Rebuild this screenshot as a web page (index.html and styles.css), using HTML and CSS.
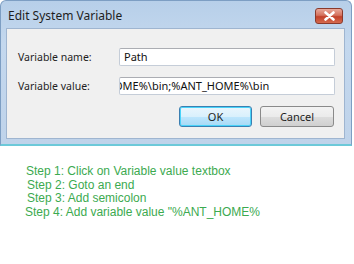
FILE: index.html
```html
<!doctype html>
<html>
<head>
	<title>Edit System Variable</title>
	<meta charset="utf-8" />
	<link rel="stylesheet" href="styles.css">
</head>
<body>
	<div class="window">
		<div class="titlebar">
			<span class="title">Edit System Variable</span>
			<div class="close">
				<svg width="13" height="10" viewBox="0 0 13 10">
					<path d="M2.5 1.5 L10.5 8.5 M10.5 1.5 L2.5 8.5" stroke="#ffffff" stroke-width="2.6" stroke-linecap="round"/>
				</svg>
			</div>
		</div>
		<div class="client">
			<div class="row">
				<span class="label">Variable name:</span>
				<div class="field"><span>Path</span></div>
			</div>
			<div class="row">
				<span class="label">Variable value:</span>
				<div class="field"><span class="scrolled">OME%\bin;%ANT_HOME%\bin</span></div>
			</div>
			<div class="buttons">
				<button class="btn ok" type="button">OK</button>
				<button class="btn" type="button">Cancel</button>
			</div>
		</div>
	</div>

	<div class="steps">
		<p class="s1">Step 1: Click on Variable value textbox</p>
		<p class="s2">Step 2: Goto an end</p>
		<p class="s3">Step 3: Add semicolon</p>
		<p class="s4">Step 4: Add variable value "%ANT_HOME%</p>
	</div>
</body>
</html>
```

FILE: styles.css
```css
body {
	margin:0;
	background-color:white;
	font-family:"Noto Sans", "Open Sans", sans-serif;
}

.window {
	width:352px;
	height:146px;
	box-sizing:border-box;
	padding:0 6px 5px 5px;
	background:linear-gradient(to bottom, #b7cfe9 0%, #c4d8ee 30%, #bfd3ea 100%);
	border:1px solid #7d9ec3;
	border-bottom:2px solid #6cc9d9;
	border-radius:6px 6px 0 0;
}

.titlebar {
	height:27px;
	display:flex;
	align-items:center;
	justify-content:space-between;
}

.title {
	font-size:12px;
	color:#1e1e1e;
	padding-left:2px;
	padding-top:2px;
}

.close {
	width:26px;
	height:14px;
	margin-right:2px;
	margin-top:3px;
	display:flex;
	align-items:center;
	justify-content:center;
	border:1px solid #8a3a2c;
	border-radius:3px;
	background:linear-gradient(to bottom, #e9a99b 0%, #d4715d 45%, #c2412a 55%, #d56a4e 100%);
}

.client {
	height:111px;
	box-sizing:border-box;
	background-color:#f0f0f0;
	border:1px solid #9fb5d0;
	padding:19px 9px 0 11px;
}

.row {
	display:flex;
	align-items:center;
	height:18px;
	margin-bottom:11px;
}

.label {
	width:101px;
	font-size:10.5px;
	color:#1e1e1e;
}

.field {
	flex:1;
	height:18px;
	box-sizing:border-box;
	background-color:white;
	border:1px solid #c5cdd8;
	border-top-color:#abadb3;
	border-radius:2px;
	overflow:hidden;
	white-space:nowrap;
	font-size:11px;
	line-height:16px;
	padding-left:4px;
	color:#111;
}

.scrolled {
	display:inline-block;
	margin-left:-10px;
}

.buttons {
	display:flex;
	justify-content:flex-end;
	gap:8px;
	margin-top:5px;
	padding-right:1px;
}

.btn {
	width:74px;
	height:21px;
	font-family:"Noto Sans", "Open Sans", sans-serif;
	font-size:11px;
	color:#1e1e1e;
	border:1px solid #8a8a8a;
	border-radius:3px;
	background:linear-gradient(to bottom, #f3f3f3 0%, #ebebeb 50%, #dddddd 51%, #cfcfcf 100%);
	padding:0;
}

.ok {
	width:73px;
	border-color:#3c7fb1;
	box-shadow:inset 0 0 0 1px #48d3f9;
	background:linear-gradient(to bottom, #eaf6fd 0%, #d9f0fc 50%, #bee6fd 51%, #a7d9f5 100%);
}

.steps {
	margin-top:19px;
	font-family:"Liberation Sans", Arial, sans-serif;
	font-size:12px;
	color:#3caa50;
}

.steps p {
	margin:0;
	line-height:13.5px;
}

.s1 { padding-left:26px; }
.s2 { padding-left:27px; }
.s3 { padding-left:27px; }
.s4 { padding-left:25px; }
```
